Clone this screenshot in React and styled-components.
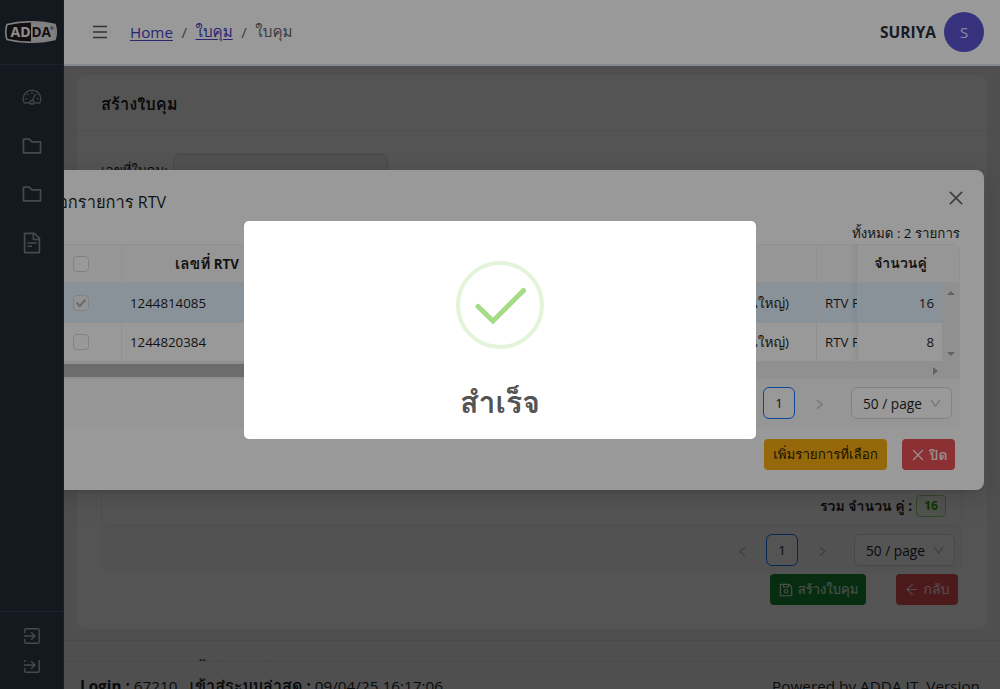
import React from 'react';
import styled, { createGlobalStyle } from 'styled-components';
import {
  AiOutlineFolder,
  AiOutlineFileText,
  AiOutlineMenu,
  AiOutlineClose,
  AiOutlineDown,
  AiOutlineLeft,
  AiOutlineRight,
  AiOutlineSave,
  AiOutlineArrowLeft,
} from 'react-icons/ai';

const GlobalStyle = createGlobalStyle`
  * { box-sizing: border-box; }
  body {
    margin: 0;
    overflow: hidden;
    font-family: "Open Sans", "Leelawadee UI", Loma, "Noto Sans Thai Looped", "Noto Sans Thai", sans-serif;
    font-size: 13.3px;
    color: #1f1f1f;
  }
`;

const Thai = styled.span`
  font-size: ${(p) => p.$scale || 1}em;
  line-height: 1;
`;

const Screen = styled.div`
  position: relative;
  width: 1000px;
  height: 689px;
  overflow: hidden;
  background: #f1f1f5;
`;

const Layout = styled.div`
  display: flex;
  height: 100%;
`;

const Sidebar = styled.aside`
  position: relative;
  z-index: 3;
  flex: 0 0 64px;
  display: flex;
  flex-direction: column;
  background: #222834;
  border-right: 1px solid #2b313f;
`;

const LogoBox = styled.div`
  height: 65px;
  padding: 21px 0 0 4px;
  border-bottom: 1px solid #353b48;
`;

const Nav = styled.nav`
  flex: 1;
  display: flex;
  flex-direction: column;
  align-items: center;
  gap: 24.5px;
  padding: 20px 0 0 1px;
  color: #757a82;
  svg { display: block; }
`;

const SideFooter = styled.div`
  height: 78px;
  border-top: 1px solid #353b48;
  padding: 16px 0 0 24px;
  svg { display: block; }
`;

const Clip = styled.div`
  margin-top: 16px;
  height: 13px;
  display: flex;
  align-items: flex-end;
  overflow: hidden;
  svg { flex: none; }
`;

const Main = styled.div`
  flex: 1;
  min-width: 0;
  display: flex;
  flex-direction: column;
`;

const Header = styled.header`
  position: relative;
  z-index: 3;
  height: 66px;
  flex: none;
  display: flex;
  align-items: center;
  padding: 0 16px 0 27px;
  background: #fff;
  border-bottom: 2px solid #dce4ee;
`;

const Crumbs = styled.div`
  display: flex;
  align-items: center;
  gap: 8.5px;
  margin-left: 21px;
  flex: 1;
  font-size: 15.2px;
  color: #666;
`;

const Crumb = styled.a`
  color: #4742bd;
  text-decoration: underline;
  text-underline-offset: 2px;
`;

const UserName = styled.span`
  font-size: 15.5px;
  font-weight: 700;
  color: #2b303b;
  margin-right: 8px;
`;

const Avatar = styled.div`
  width: 40px;
  height: 40px;
  border-radius: 50%;
  background: #5a54d3;
  color: #e8e8ff;
  display: grid;
  place-items: center;
  font-size: 15px;
`;

const Card = styled.section`
  margin: 9px 13.5px 11px 13px;
  height: 554px;
  flex: none;
  border-radius: 8px;
  background: #fff;
  display: flex;
  flex-direction: column;
`;

const CardTitle = styled.div`
  height: 56px;
  flex: none;
  padding: 3px 24px 0;
  display: flex;
  align-items: center;
  font-size: 15px;
  font-weight: 700;
  border-bottom: 1px solid #f0f0f0;
`;

const Field = styled.div`
  display: flex;
  align-items: center;
  gap: 3px;
  padding: 23px 24px 0;
`;

const FieldLabel = styled.label`
  width: 69px;
  white-space: nowrap;
`;

const Input = styled.div`
  width: 215px;
  height: 32px;
  border: 1px solid #d9d9d9;
  border-radius: 6px;
  background: #f5f5f5;
`;

const Bottom = styled.div`
  margin: auto 24.5px 24px 24px;
`;

const SumRow = styled.div`
  height: 40px;
  display: flex;
  justify-content: flex-end;
  align-items: center;
  gap: 4px;
  padding-right: 15px;
  font-weight: 700;
  border: 1px solid #f0f0f0;
  border-top: 0;
  border-radius: 0 0 8px 8px;
`;

const Tag = styled.span`
  width: 30px;
  height: 22px;
  display: grid;
  place-items: center;
  border: 1px solid #a0d87a;
  border-radius: 4px;
  background: #f6ffed;
  color: #389e0d;
  font-size: 12px;
`;

const Pager = styled.div`
  height: ${(p) => p.$h}px;
  padding-right: ${(p) => p.$right}px;
  display: flex;
  align-items: center;
  justify-content: flex-end;
  background: #fafafa;
  border-radius: 0 0 8px 8px;
`;

const PagerArrow = styled.span`
  width: 48px;
  display: grid;
  place-items: center;
  color: #b5b5b5;
  padding-top: 3px;
`;

const PageNumber = styled.span`
  width: 32px;
  height: 32px;
  display: grid;
  place-items: center;
  border: 1px solid #1677ff;
  border-radius: 6px;
  background: #fff;
`;

const PageSize = styled.span`
  width: 101px;
  height: 32px;
  margin-left: 8px;
  padding: 0 9px 0 11px;
  display: flex;
  align-items: center;
  justify-content: space-between;
  white-space: nowrap;
  border: 1px solid #d9d9d9;
  border-radius: 6px;
  background: #fff;
  font-size: 13.7px;
  svg { color: #b5b5b5; }
`;

const Actions = styled.div`
  display: flex;
  justify-content: flex-end;
  gap: ${(p) => p.$gap}px;
  padding-right: ${(p) => p.$right}px;
  padding-top: ${(p) => p.$top || 0}px;
`;

const tones = {
  green: ['#198b33', '#e8f3ea'],
  red: ['#e85055', '#ffe9e9'],
  amber: ['#f9ae10', '#2a2000'],
};

const Button = styled.button`
  width: ${(p) => p.$w}px;
  height: 31px;
  padding: 0;
  border: 0;
  border-radius: 4px;
  display: flex;
  align-items: center;
  justify-content: center;
  gap: 4px;
  white-space: nowrap;
  font: inherit;
  font-weight: ${(p) => p.$weight || 400};
  background: ${(p) => tones[p.$tone][0]};
  color: ${(p) => tones[p.$tone][1]};
  svg { flex: none; }
`;

const FooterBar = styled.footer`
  height: ${(p) => p.$h}px;
  flex: none;
  overflow: hidden;
  display: flex;
  justify-content: space-between;
  align-items: flex-start;
  padding: ${(p) => p.$top}px 20px 0 16px;
  border-top: 1px solid #e2e2e6;
  font-size: 15.3px;
  line-height: 22px;
  white-space: pre;
`;

const Mask = styled.div`
  position: absolute;
  inset: 0;
  z-index: ${(p) => p.$z};
  background: rgba(0, 0, 0, ${(p) => p.$alpha});
`;

const Modal = styled.div`
  position: absolute;
  z-index: 2;
  left: 16px;
  right: 16px;
  top: 170px;
  height: 320px;
  padding: 20px 24px;
  border-radius: 8px;
  background: #fff;
  box-shadow: 0 6px 16px rgba(0, 0, 0, 0.08), 0 3px 6px -4px rgba(0, 0, 0, 0.12),
    0 9px 28px 8px rgba(0, 0, 0, 0.05);
`;

const ModalHead = styled.div`
  height: 33px;
  display: flex;
  justify-content: space-between;
  align-items: flex-start;
  svg { color: #666; margin: -2px -6px 0 0; }
`;

const ModalTitle = styled.div`
  width: 126px;
  display: flex;
  justify-content: flex-end;
  white-space: pre;
  font-size: 16px;
  line-height: 24px;
  align-items: baseline;
`;

const Total = styled.div`
  height: 21px;
  line-height: 21px;
  text-align: right;
`;

const Table = styled.div`
  display: grid;
  grid-template-columns: 82px 170px 525px 41px 84px 17px;
  grid-template-rows: 38px 40px 39px;
  border-top: 1px solid #f0f0f0;
  border-right: 1px solid #f0f0f0;
  border-radius: 8px 8px 0 0;
  background: #fff;
  overflow: hidden;
`;

const Cell = styled.div`
  display: flex;
  align-items: center;
  justify-content: ${(p) => p.$align || 'flex-start'};
  grid-column: span ${(p) => p.$span || 1};
  padding: 0 ${(p) => p.$right || 8}px 0 8px;
  overflow: hidden;
  white-space: pre;
  border-right: ${(p) => (p.$line ? 1 : 0)}px solid #f0f0f0;
  border-bottom: 1px solid #f0f0f0;
  background: ${(p) => (p.$head ? '#fafafa' : p.$on ? '#e6f4ff' : '#fff')};
  font-weight: ${(p) => (p.$head ? 700 : 400)};
  ${(p) => p.$fade && 'box-shadow: inset -10px 0 8px -8px rgba(5, 5, 5, 0.07);'}
`;

const Check = styled.span`
  width: 16px;
  height: 16px;
  margin-left: 25px;
  border: 1px solid #d9d9d9;
  border-radius: 4px;
  display: grid;
  place-items: center;
  background: ${(p) => (p.$on ? '#f5f5f5' : '#fff')};
`;

const VScroll = styled.div`
  grid-column: 6;
  grid-row: 2 / 4;
  display: flex;
  flex-direction: column;
  justify-content: space-between;
  align-items: center;
  padding: 8px 0 6px;
  background: #f0f0f0;
`;

const HScroll = styled.div`
  height: 17px;
  display: flex;
  align-items: center;
  justify-content: space-between;
  padding-right: 22px;
  background: #f0f0f0;
`;

const Thumb = styled.div`
  width: 560px;
  height: 13px;
  background: #b4b4b4;
`;

const Arrow = styled.i`
  border: 4px solid transparent;
  ${(p) => p.$dir === 'up' && 'border-bottom-color: #a3a3a3; border-top: 0;'}
  ${(p) => p.$dir === 'down' && 'border-top-color: #a3a3a3; border-bottom: 0;'}
  ${(p) => p.$dir === 'right' && 'border-left: 5px solid #a3a3a3; border-right: 0;'}
`;

const Alert = styled.div`
  position: absolute;
  z-index: 5;
  left: 244px;
  top: 221px;
  width: 512px;
  height: 218px;
  border-radius: 5px;
  background: #fff;
  display: flex;
  flex-direction: column;
  align-items: center;
  padding-top: 40px;
`;

const AlertTitle = styled.h2`
  margin: 31px 0 0;
  font-size: 30.3px;
  line-height: 44px;
  font-weight: 600;
  color: #545454;
`;

function Logo() {
  return (
    <svg width="54" height="22" viewBox="0 0 54 22">
      <path d="M3 3.5Q27-2 51 3.5Q53.5 11 51 18.5Q27 24 3 18.5Q.5 11 3 3.5Z" fill="#1d1a1d" stroke="#d8d8d8" strokeWidth="1.6" />
      <path d="M27 1.2Q40 1 50.5 4Q53 11 50.5 18Q40 21 27 20.8Z" fill="#d8d8d8" />
      <text x="6.5" y="16.2" fontFamily="Open Sans" fontSize="14.5" fontWeight="700" textLength="20" lengthAdjust="spacingAndGlyphs" fill="#eee">AD</text>
      <text x="27.5" y="16.2" fontFamily="Open Sans" fontSize="14.5" fontWeight="700" textLength="19.5" lengthAdjust="spacingAndGlyphs" fill="#1d1a1d">DA</text>
      <circle cx="48" cy="7" r="1.3" fill="none" stroke="#1d1a1d" strokeWidth=".6" />
    </svg>
  );
}

function GaugeIcon() {
  return (
    <svg width="24" height="24" viewBox="0 0 25 25" fill="none" stroke="currentColor" strokeWidth="1.3">
      <path d="M10.3 18.6H4.5Q3.2 17 3.2 14.6A9.3 9.3 0 0 1 21.8 14.6Q21.8 17 20.5 18.6H14.7" />
      <circle cx="12.5" cy="18" r="2" />
      <path d="M13.1 16L16 9.5" />
      <path d="M12.5 7V9M7.3 9.3L8.6 10.6M5.6 14.5H7.4M17.6 14.5H19.4M18 9.3L17.5 10" />
    </svg>
  );
}

function ExitIcon() {
  return (
    <svg width="16" height="16" viewBox="0 0 16 16" fill="none" stroke="#757a82" strokeWidth="1.4">
      <path d="M.8 5V2Q.8.8 2 .8H14Q15.2.8 15.2 2V14Q15.2 15.2 14 15.2H2Q.8 15.2.8 14V11" />
      <path d="M0 8H10.6M7.2 4.3L10.9 8L7.2 11.7" />
    </svg>
  );
}

function FooterText() {
  return (
    <>
      <span><b>Login :</b> 67210   <b><Thai $scale={1.06}>เข้าสู่ระบบล่าสุด</Thai> :</b> 09/04/25 16:17:06</span>
      <span>Powered by ADDA IT. Version</span>
    </>
  );
}

function Pagination({ h, right }) {
  return (
    <Pager $h={h} $right={right}>
      <PagerArrow><AiOutlineLeft size={13} /></PagerArrow>
      <PageNumber>1</PageNumber>
      <PagerArrow><AiOutlineRight size={13} /></PagerArrow>
      <PageSize>50 / page <AiOutlineDown size={13} /></PageSize>
    </Pager>
  );
}

function Row({ on, code, amount }) {
  return (
    <>
      <Cell $line $on={on}>
        <Check $on={on}>
          {on && (
            <svg width="12" height="10" viewBox="0 0 12 10" fill="none" stroke="#b0b0b0" strokeWidth="2">
              <path d="M1.5 4.6L4.8 8L10.5 1.8" />
            </svg>
          )}
        </Check>
      </Cell>
      <Cell $on={on}>{code}</Cell>
      <Cell $line $on={on} $align="flex-end" $right={27}><Thai $scale={1.03}>นใหญ่</Thai>)</Cell>
      <Cell $line $on={on} $fade>RTV P</Cell>
      <Cell $on={on} $align="flex-end">{amount}</Cell>
    </>
  );
}

export default function App() {
  return (
    <Screen>
      <GlobalStyle />
      <Layout>
        <Sidebar>
          <LogoBox><Logo /></LogoBox>
          <Nav>
            <GaugeIcon />
            <AiOutlineFolder size={24} />
            <AiOutlineFolder size={24} />
            <AiOutlineFileText size={24} />
          </Nav>
          <SideFooter>
            <ExitIcon />
            <Clip><ExitIcon /></Clip>
          </SideFooter>
        </Sidebar>
        <Main>
          <Header>
            <AiOutlineMenu size={18} color="#555" />
            <Crumbs>
              <Crumb>Home</Crumb>
              <span>/</span>
              <Crumb>ใบคุม</Crumb>
              <span>/</span>
              <span>ใบคุม</span>
            </Crumbs>
            <UserName>SURIYA</UserName>
            <Avatar>S</Avatar>
          </Header>
          <Card>
            <CardTitle><Thai $scale={1.1}>สร้างใบคุม</Thai></CardTitle>
            <Field>
              <FieldLabel>เลขที่ใบคุม:</FieldLabel>
              <Input />
            </Field>
            <Bottom>
              <SumRow><span><Thai $scale={1.06}>รวม จำนวน คู่</Thai> :</span> <Tag>16</Tag></SumRow>
              <Pagination h={48} right={7} />
              <Actions $gap={30} $right={4}>
                <Button $tone="green" $w={96}><AiOutlineSave size={16} /><Thai $scale={0.98}>สร้างใบคุม</Thai></Button>
                <Button $tone="red" $w={62}><AiOutlineArrowLeft size={15} /><Thai $scale={1.06}>กลับ</Thai></Button>
              </Actions>
            </Bottom>
          </Card>
          <FooterBar $h={21} $top={15}><FooterText /></FooterBar>
          <FooterBar $h={28} $top={13}><FooterText /></FooterBar>
        </Main>
      </Layout>

      <Mask $z={1} $alpha={0.45} />
      <Modal>
        <ModalHead>
          <ModalTitle><Thai $scale={1.03}>เลือกรายการ</Thai> RTV</ModalTitle>
          <AiOutlineClose size={20} />
        </ModalHead>
        <Total>ทั้งหมด : 2 รายการ</Total>
        <Table>
          <Cell $head $line><Check /></Cell>
          <Cell $head $align="center"><Thai $scale={1.16}>เลขที่</Thai> RTV</Cell>
          <Cell $head $line />
          <Cell $head $line $fade />
          <Cell $head $span={2} $align="center" $right={24}><Thai $scale={1.06}>จำนวนคู่</Thai></Cell>
          <Row on code="1244814085" amount="16" />
          <VScroll><Arrow $dir="up" /><Arrow $dir="down" /></VScroll>
          <Row code="1244820384" amount="8" />
        </Table>
        <HScroll><Thumb /><Arrow $dir="right" /></HScroll>
        <Pagination h={48} right={8} />
        <Actions $gap={15} $right={5} $top={12}>
          <Button $tone="amber" $w={123}>เพิ่มรายการที่เลือก</Button>
          <Button $tone="red" $w={53} $weight={700}><AiOutlineClose size={16} /><Thai $scale={1.04}>ปิด</Thai></Button>
        </Actions>
      </Modal>

      <Mask $z={4} $alpha={0.4} />
      <Alert>
        <svg width="88" height="88" viewBox="0 0 88 88" fill="none">
          <circle cx="44" cy="44" r="42" stroke="#e4f4da" strokeWidth="4" />
          <path d="M22 45.5L37 60L67.5 29.5" stroke="#a5dc86" strokeWidth="5" strokeLinecap="round" />
        </svg>
        <AlertTitle>สำเร็จ</AlertTitle>
      </Alert>
    </Screen>
  );
}
